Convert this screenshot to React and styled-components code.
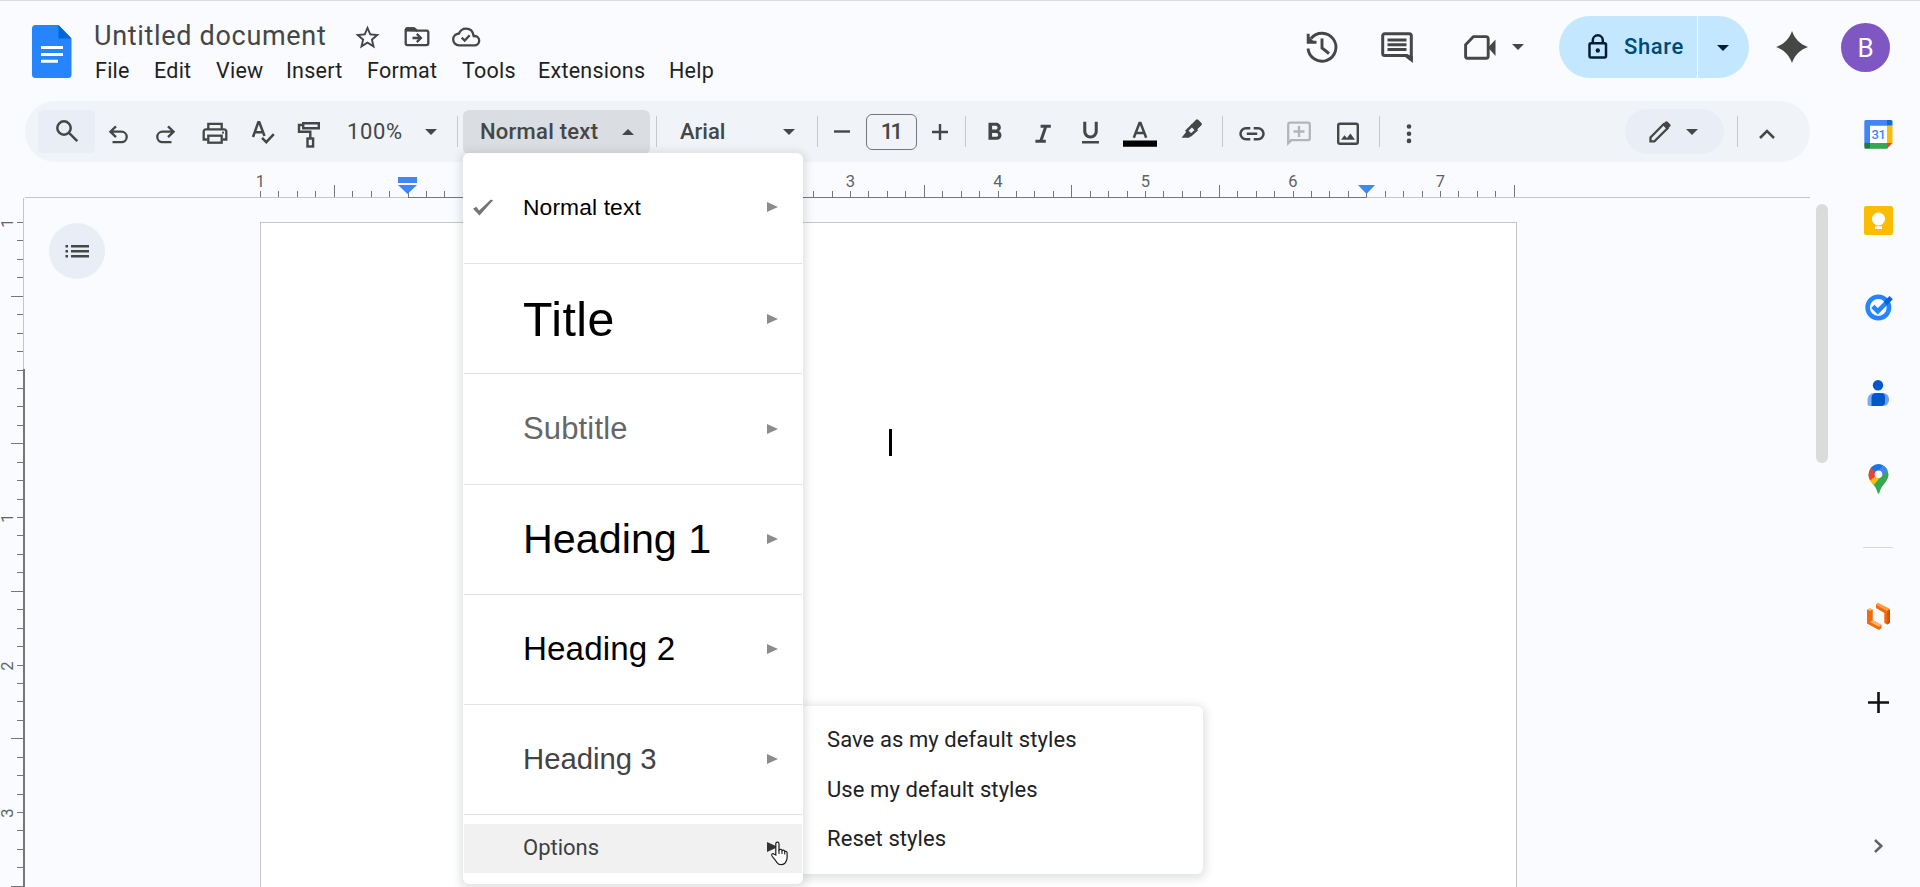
import React from "react";
import styled, { createGlobalStyle, css } from "styled-components";
import { MdFormatBold, MdFormatUnderlined } from "react-icons/md";

const INK = "#444746";
const INCH = 147.52;

const GlobalStyle = createGlobalStyle`
  *, *::before, *::after { box-sizing: border-box; }
  body { margin: 0; background: #f9fbff; overflow: hidden; font-family: Roboto, "Liberation Sans", sans-serif; }
  svg { display: block; flex: none; overflow: visible; }
`;

const Shell = styled.div`
  position: relative;
  display: flex;
  flex-direction: column;
  width: 1920px;
  height: 887px;
  overflow: hidden;
  background: #f9fbff;
  border-top: 1px solid #dadce2;
  color: ${INK};
`;

/* ---------- header ---------- */
const Header = styled.header`
  display: flex;
  height: 100px;
  padding: 0 30px 0 32px;
`;
const Logo = styled.div`
  width: 62px;
  padding-top: 24px;
`;
const Identity = styled.div`
  padding-top: 18px;
`;
const TitleRow = styled.div`
  display: flex;
  align-items: center;
  height: 33px;
`;
const DocTitle = styled.h1`
  margin: 0;
  width: 249px;
  padding-top: 2px;
  font-size: 27px;
  font-weight: 400;
  line-height: 33px;
  letter-spacing: 0.68px;
  white-space: nowrap;
`;
const TitleIcon = styled.span`
  display: flex;
  justify-content: center;
  width: ${(p) => p.$w}px;
  padding-top: 3px;
`;
const MenuBar = styled.nav`
  display: flex;
`;
const MenuName = styled.span`
  width: ${(p) => p.$w}px;
  padding-left: 1px;
  color: #1f1f1f;
  font-size: 21.5px;
  line-height: 37px;
  letter-spacing: 0.25px;
  white-space: nowrap;
`;
const Actions = styled.div`
  display: flex;
  align-items: center;
  height: 62px;
  margin: 15px 0 0 auto;
`;
const ActionIcon = styled.span`
  display: flex;
  align-items: center;
  justify-content: center;
  gap: ${(p) => p.$gap || 0}px;
  width: ${(p) => p.$w || 56}px;
  margin-left: ${(p) => p.$ml || 0}px;
  padding-left: ${(p) => p.$pl || 0}px;
`;
const Share = styled.div`
  display: flex;
  width: 190px;
  height: 62px;
  margin-left: 23px;
  border-radius: 31px;
  overflow: hidden;
  background: #c2e7ff;
`;
const ShareMain = styled.span`
  display: flex;
  align-items: center;
  gap: 16px;
  width: 139px;
  padding: 0 0 1px 29px;
  border-right: 1px solid #fff;
  color: #004a77;
  font-size: 22px;
  font-weight: 500;
  letter-spacing: 0.6px;
`;
const ShareMore = styled.span`
  display: flex;
  align-items: center;
  padding: 2px 0 0 19px;
`;
const Avatar = styled.span`
  display: flex;
  align-items: center;
  justify-content: center;
  width: 49px;
  height: 49px;
  margin-left: 22px;
  padding-top: 1px;
  border-radius: 50%;
  background: #7e57c2;
  color: #fff;
  font-size: 26px;
`;

/* ---------- toolbar ---------- */
const Body = styled.div`
  display: flex;
  flex: 1;
  min-height: 0;
`;
const Editor = styled.div`
  display: flex;
  flex-direction: column;
  width: 1836px;
`;
const Toolbar = styled.div`
  display: flex;
  align-items: center;
  flex: none;
  width: 1785px;
  height: 61px;
  margin-left: 25px;
  padding: 0 19px 0 13px;
  border-radius: 31px;
  background: #f0f3f8;
`;
const Tool = styled.span`
  display: flex;
  align-items: center;
  justify-content: center;
  flex: none;
  width: ${(p) => p.$w}px;
  height: 43px;
  margin-left: ${(p) => p.$ml || 0}px;
  padding-top: ${(p) => p.$pt || 0}px;
  ${(p) =>
    p.$search &&
    css`
      border-radius: 4px;
      background: #e9eef6;
    `}
`;
const Divider = styled.span`
  flex: none;
  width: 1px;
  height: 31px;
  margin-left: ${(p) => p.$ml || 0}px;
  background: #c7c9cc;
`;
const Picker = styled.span`
  display: flex;
  align-items: center;
  justify-content: space-between;
  flex: none;
  width: ${(p) => p.$w}px;
  height: 44px;
  margin-left: ${(p) => p.$ml || 0}px;
  padding: 0 ${(p) => p.$pr}px 0 ${(p) => p.$pl}px;
  border-radius: 6px;
  background: ${(p) => (p.$open ? "#dadde1" : "transparent")};
  font-size: 22px;
  font-weight: ${(p) => p.$weight || 500};
  letter-spacing: ${(p) => p.$ls || 0}px;
  white-space: nowrap;
`;
const SizeBox = styled.span`
  display: flex;
  align-items: center;
  justify-content: center;
  width: 51px;
  height: 36px;
  padding-right: 2px;
  border: 1px solid #747775;
  border-radius: 6px;
  font-size: 22px;
  font-weight: 500;
  letter-spacing: -2.8px;
`;
const ModePill = styled.span`
  display: flex;
  align-items: center;
  gap: 15px;
  width: 99px;
  height: 45px;
  margin-left: auto;
  padding-left: 24px;
  border-radius: 23px;
  background: #e9eef6;
`;

/* ---------- rulers ---------- */
const HRuler = styled.div`
  display: flex;
  flex-direction: column;
  position: relative;
  flex: none;
  height: 36px;
  padding-left: 25px;
`;
const HTicks = styled.div`
  display: flex;
  align-items: flex-end;
  height: 35px;
  padding-left: 235px;
`;
const HTick = styled.span`
  display: flex;
  flex-direction: column;
  align-items: flex-start;
  flex: none;
  width: ${INCH / 8}px;
  &::after {
    content: "";
    width: 1px;
    height: ${(p) => (p.$half ? 12 : 6)}px;
    background: #747775;
  }
`;
const HLabel = styled.span`
  width: 20px;
  margin-left: -9.500px;
  color: #5f6368;
  font-size: 16.5px;
  line-height: 19px;
  text-align: center;
`;
const HLine = styled.div`
  display: grid;
  grid-template-columns: 383px 959px 443px;
  height: 1px;
`;
const LineSegment = styled.span`
  background: ${(p) => (p.$dark ? "#747775" : "#c4c7c5")};
`;
const Marker = styled.span`
  position: absolute;
  top: ${(p) => p.$top}px;
  left: ${(p) => p.$left}px;
`;
const Workspace = styled.div`
  display: flex;
  flex: 1;
  min-height: 0;
  align-items: flex-start;
`;
const VRuler = styled.div`
  display: flex;
  flex: none;
  width: 25px;
  height: 100%;
  overflow: hidden;
`;
const VTicks = styled.div`
  display: flex;
  flex-direction: column;
  width: 23px;
  padding-top: 24px;
`;
const VTick = styled.span`
  display: flex;
  justify-content: space-between;
  align-items: flex-start;
  flex: none;
  height: ${INCH / 8}px;
  &::after {
    content: "";
    width: ${(p) => (p.$half ? 12 : 6)}px;
    height: 1px;
    margin-left: auto;
    background: #747775;
  }
`;
const VLabel = styled.span`
  width: 16px;
  height: 16px;
  margin-top: -7px;
  color: #5f6368;
  font-size: 16.5px;
  line-height: 16px;
  text-align: center;
  transform: rotate(-90deg);
`;
const VLine = styled.div`
  display: grid;
  grid-template: 171px 1fr / auto;
  width: 2px;
`;
const VSegment = styled.span`
  width: ${(p) => (p.$dark ? 2 : 1)}px;
  background: ${(p) => (p.$dark ? "#747775" : "#c4c7c5")};
`;

/* ---------- page ---------- */
const OutlineButton = styled.span`
  display: flex;
  align-items: center;
  justify-content: center;
  width: 56px;
  height: 56px;
  margin: 25px 0 0 24px;
  border-radius: 50%;
  background: #e9eef6;
`;
const Page = styled.main`
  width: 1257px;
  height: 100%;
  margin: 24px 0 0 155px;
  padding: 206px 0 0 628px;
  border: 1px solid #c4c7c5;
  background: #fff;
`;
const Caret = styled.span`
  display: block;
  width: 3px;
  height: 27px;
  background: #000;
`;
const Scrollbar = styled.span`
  width: 12px;
  height: 259px;
  margin: 6px 0 0 299px;
  border-radius: 6px;
  background: #dadcdb;
`;

/* ---------- side panel ---------- */
const SidePanel = styled.aside`
  display: flex;
  flex-direction: column;
  align-items: center;
  width: 84px;
  padding-top: 18px;
`;
const SideApp = styled.span`
  display: flex;
  align-items: center;
  justify-content: center;
  height: 30px;
  margin-bottom: ${(p) => p.$mb}px;
`;
const SideRule = styled.span`
  width: 30px;
  height: 1px;
  margin-bottom: 53px;
  background: #d6d8db;
`;

/* ---------- menus ---------- */
const popup = css`
  position: absolute;
  display: flex;
  flex-direction: column;
  border-radius: 6px;
  background: #fff;
  box-shadow: 0 2px 8px 3px rgba(60, 64, 67, 0.15);
`;
const StyleMenu = styled.div`
  ${popup}
  top: 152px;
  left: 463px;
  width: 340px;
  height: 731px;
  padding: 0 1px;
`;
const StyleItem = styled.div`
  display: flex;
  align-items: center;
  flex: none;
  height: ${(p) => p.$h}px;
  padding: 0 24px ${(p) => p.$pb || 0}px 9px;
  border-bottom: 1px solid #e1e3e1;
`;
const CheckSlot = styled.span`
  width: 50px;
`;
const StyleName = styled.span`
  flex: 1;
  color: ${(p) => p.$color};
  font-family: "Liberation Sans", Arial, sans-serif;
  font-size: ${(p) => p.$size}px;
  line-height: 60px;
  letter-spacing: ${(p) => p.$ls || 0}px;
  white-space: nowrap;
`;
const OptionsItem = styled.div`
  display: flex;
  align-items: center;
  justify-content: space-between;
  height: 49px;
  margin-top: 9px;
  padding: 0 24px 3px 59px;
  background: #f1f1f1;
  color: #3c4043;
  font-size: 22px;
`;
const SubMenu = styled.div`
  ${popup}
  top: 705px;
  left: 803px;
  width: 400px;
  height: 168px;
  padding: 9px 0 0 24px;
  border-radius: 0 6px 6px 0;
`;
const SubItem = styled.span`
  color: #202124;
  font-size: 22px;
  line-height: 49.5px;
  letter-spacing: 0.08px;
`;
const Pointer = styled.span`
  position: absolute;
  top: 840px;
  left: 770px;
`;

/* ---------- drawings ---------- */
const Glyph = ({ w = 36, h = 36, s = 2.3, c = INK, children }) => (
  <svg width={w} height={h} viewBox={`0 0 ${w} ${h}`} fill="none" stroke={c} strokeWidth={s}>
    {children}
  </svg>
);
const Triangle = ({ up, c = INK }) => (
  <svg width="12" height="6" viewBox="0 0 12 6" fill={c}>
    <path d={up ? "M0 6h12L6 0z" : "M0 0h12L6 6z"} />
  </svg>
);
const SubArrow = ({ c = "#8c8c8c" }) => (
  <svg width="11" height="10" viewBox="0 0 11 10" fill={c}>
    <path d="M0 0l11 5L0 10z" />
  </svg>
);

const DocsLogo = () => (
  <svg width="40" height="53" viewBox="0 0 40 53">
    <path d="M3.500 0H26.500L39.500 13.500V49.500a3.500 3.500 0 0 1-3.500 3.500H3.500A3.500 3.500 0 0 1 0 49.500V3.500A3.500 3.500 0 0 1 3.500 0z" fill="#2684fc" />
    <path d="M26.500 0l13 13.500h-13z" fill="#0066da" />
    <path d="M9 21h22v3H9zM9 28h22v3H9zM9 34.800h17v3H9z" fill="#fff" />
  </svg>
);
const Star = () => (
  <svg width="29" height="29" viewBox="0 0 24 24" fill={INK}>
    <path d="M22 9.240l-7.190-.62L12 2 9.190 8.630 2 9.240l5.460 4.730L5.820 21 12 17.270 18.180 21l-1.630-7.030L22 9.240zM12 15.400l-3.760 2.270 1-4.280-3.320-2.880 4.380-.38L12 6.100l1.710 4.040 4.380.38-3.320 2.880 1 4.280L12 15.400z" />
  </svg>
);
const FolderMove = () => (
  <Glyph w={26} h={20} s={2.3}>
    <path d="M1.700 2v14.300a1.800 1.800 0 0 0 1.800 1.800h19a1.800 1.800 0 0 0 1.800-1.800V5.400a1.800 1.800 0 0 0-1.800-1.800H13L10.200 1.300H2.500" />
    <path d="M1 4.500V2.200C1 1 1.700.3 2.800.3h7L13 3.500v1.300z" fill={INK} stroke="none" />
    <path d="M8.500 11h8M12.800 6.900l4.100 4.100-4.100 4.100" />
  </Glyph>
);
const CloudDone = () => (
  <Glyph w={28} h={20} s={2.3}>
    <path d="M7 18.400h15.300a4.700 4.700 0 0 0 .4-9.400h-1C21 4.300 18 1.600 14 1.600c-3.200 0-5.800 1.900-7 4.900-3.300.3-5.800 2.800-5.800 5.900C1.200 15.800 3.800 18.400 7 18.400z" />
    <path d="M9.700 10.600l3 3 5-5.300" />
  </Glyph>
);
const History = () => (
  <Glyph w={32} h={32} s={2.9}>
    <path d="M2 17.500A14 14 0 1 0 5 7.500" />
    <path d="M2.200 2.800v8.400h8.300" />
    <path d="M2 5l7 6.500H2z" fill={INK} stroke="none" />
    <path d="M16 7.500v9.500l7 5.500" />
  </Glyph>
);
const Comment = () => (
  <Glyph w={32} h={31} s={3}>
    <path d="M26 23.600H3.700A2 2 0 0 1 1.700 21.600V3.700a2 2 0 0 1 2-2h24.600a2 2 0 0 1 2 2V26z" />
    <path d="M23 24h8.800v7z" fill={INK} stroke="none" />
    <path d="M6.500 8h19M6.500 12.700h19M6.500 17.400h19" />
  </Glyph>
);
const Meet = () => (
  <Glyph w={32} h={25} s={2.9}>
    <path d="M9.500 1.600h12.700a2 2 0 0 1 2 2V21.300a2 2 0 0 1-2 2H3.600a2 2 0 0 1-2-2V9.800z" strokeLinejoin="round" />
    <path d="M24 12.500L31.500 4.500v16.500z" fill={INK} stroke="none" />
  </Glyph>
);
const Lock = () => (
  <Glyph w={20} h={26} s={2.5} c="#001d35">
    <rect x="1.500" y="9.300" width="16.500" height="14.300" rx="1.500" />
    <path d="M4.800 9V6.300a5 5 0 0 1 10 0V9" />
    <circle cx="9.800" cy="16.500" r="2.200" fill="#001d35" stroke="none" />
  </Glyph>
);
const Sparkle = () => (
  <svg width="32" height="32" viewBox="0 0 32 32" fill={INK}>
    <path d="M16 0C18.800 8 24 13.200 32 16 24 18.800 18.800 24 16 32 13.200 24 8 18.800 0 16 8 13.200 13.200 8 16 0z" />
  </svg>
);
const Search = () => (
  <Glyph s={2.5}>
    <circle cx="15" cy="14" r="6.700" />
    <path d="M19.700 18.700l8.600 8.500" />
  </Glyph>
);
const Undo = () => (
  <Glyph>
    <path d="M16 12.300l-5.600 5.400 5.600 5.400M10.800 17.700h10.700a5.200 5.200 0 0 1 0 10.400H12.500" />
  </Glyph>
);
const Redo = () => (
  <Glyph>
    <path d="M20 12.300l5.600 5.400-5.600 5.400M25.200 17.700H14.500a5.200 5.200 0 0 0 0 10.400h9" />
  </Glyph>
);
const Print = () => (
  <Glyph>
    <path d="M11.300 15V9.800h13.400V15M10.500 25.500H6.700V17.500a2.200 2.200 0 0 1 2.200-2.200h18.200a2.200 2.200 0 0 1 2.200 2.200v8H25.500" />
    <rect x="11.300" y="21.700" width="13.400" height="7" />
    <circle cx="26" cy="18.700" r="1.100" fill={INK} stroke="none" />
  </Glyph>
);
const Spellcheck = () => (
  <Glyph s={2.5}>
    <path d="M8 23L13.300 8.200h1L19.500 22M9.800 18.300h8M17 23.800l4.300 4.300 7.500-8" />
  </Glyph>
);
const PaintRoller = () => (
  <Glyph s={2.4}>
    <path d="M12.200 9.200h15.600v5H12.200zM12 11H8v6.800h11.300V24" />
    <rect x="16.500" y="24.500" width="5.600" height="8" />
  </Glyph>
);
const Italic = () => (
  <Glyph s={3}>
    <path d="M15.600 12.200h10.200M10.400 27.300h10.400M20.800 12.500L15.800 27" />
  </Glyph>
);
const TextColor = () => (
  <Glyph s={2.5}>
    <path d="M11.800 23.800L17.500 9h1L24.200 23.800M13.800 19h8.500" />
    <path d="M1 26.500h34v6.200H1z" fill="#000" stroke="none" />
  </Glyph>
);
const Highlighter = () => (
  <Glyph s={2}>
    <path d="M7.500 23.700l5-6.200L17.500 21.500l-2.500 2.200z" fill={INK} stroke="none" />
    <path d="M12.800 16.700l4.200 4.200 5.300-4.800-4.300-4.600z" strokeWidth="2.600" />
    <path d="M17 11l5-5.200c.8-.8 1.500-.8 2.200 0l3.200 3.200c.7.7.7 1.400 0 2.200l-5.300 5.200z" fill={INK} stroke="none" />
  </Glyph>
);
const LinkIcon = () => (
  <Glyph s={2.5}>
    <path d="M16.300 25.200h-4.300a5.300 5.300 0 0 1 0-11h4.300M19.700 14.200H24a5.300 5.300 0 0 1 0 11h-4.300M12.800 19.700h10.400" />
  </Glyph>
);
const AddComment = () => (
  <Glyph s={2.3} c="#b3b6b9">
    <path d="M7.200 29V10.700a2 2 0 0 1 2-2h17.600a2 2 0 0 1 2 2v13.500a2 2 0 0 1-2 2H9" />
    <path d="M6.100 26v6l6-6z" fill="#b3b6b9" stroke="none" />
    <path d="M18 12v11M12.500 17.500h11" />
  </Glyph>
);
const ImageIcon = () => (
  <Glyph s={2.4}>
    <rect x="8.200" y="9.700" width="19.600" height="20" rx="1.800" />
    <path d="M11 25.800l3.500-4.600 2.500 2.800 3.400-4.600 4.600 6.400z" fill={INK} stroke="none" />
  </Glyph>
);
const Dots = () => (
  <svg width="36" height="36" viewBox="0 0 36 36" fill={INK}>
    <circle cx="18" cy="12.500" r="2.300" />
    <circle cx="18" cy="19.700" r="2.300" />
    <circle cx="18" cy="26.900" r="2.300" />
  </svg>
);
const Pencil = () => (
  <Glyph w={22} h={22} s={2.3}>
    <path d="M1.500 20.300v-3.900L14.500 3.300l4 4L5.400 20.300z" />
    <path d="M13.500 3.500L16.300.8c.8-.7 1.600-.7 2.300 0l2.500 2.400c.7.7.7 1.500 0 2.200L18.200 8.200z" fill={INK} stroke="none" />
  </Glyph>
);
const BulletList = () => (
  <Glyph w={24} h={15} s={2.6}>
    <path d="M6 2.200h18M6 7.300h18M6 12.300h18M.5 2.200H3M.5 7.300H3M.5 12.300H3" />
  </Glyph>
);
const Check = () => (
  <svg width="21" height="17" viewBox="0 0 21 17" fill="#757575">
    <path d="M0 9.800l3.200-2 3 3.700L17.500.8l2.800.2L6.500 16.500z" />
  </svg>
);

const CalendarDay = styled.text`
  font: 500 13px Roboto, sans-serif;
  letter-spacing: -0.5px;
`;
const Calendar = () => (
  <svg width="29" height="29" viewBox="0 0 29 29">
    <rect x=".3" width="28.200" height="28.800" rx="1.500" fill="#fff" />
    <path d="M.3 23V1.500A1.500 1.500 0 0 1 1.800 0H23v5.700H6V23z" fill="#4285f4" />
    <path d="M23 0h4a1.500 1.500 0 0 1 1.500 1.500V5.700H23z" fill="#1967d2" />
    <path d="M23 5.700h5.500V23H23z" fill="#fbbc04" />
    <path d="M6 23h17v5.800H6z" fill="#34a853" />
    <path d="M.3 23H6v5.800H1.800a1.500 1.500 0 0 1-1.500-1.500z" fill="#188038" />
    <path d="M23 23h5.500L23 28.800z" fill="#ea4335" />
    <CalendarDay x="14.500" y="19" textAnchor="middle" fill="#4285f4">31</CalendarDay>
  </svg>
);
const Keep = () => (
  <svg width="29" height="29" viewBox="0 0 29 29">
    <rect width="29" height="29" rx="2" fill="#fbbc04" />
    <circle cx="14.500" cy="13" r="6.500" fill="#fff" />
    <path d="M11.500 16h6v2.800h-6zM11 20.300h7V23h-7z" fill="#fff" />
  </svg>
);
const Tasks = () => (
  <svg width="29" height="28" viewBox="0 0 29 28" fill="none">
    <circle cx="14.300" cy="14.500" r="10.700" stroke="#2684fc" strokeWidth="4.600" />
    <path d="M8.800 13.300l5 5L25 7" stroke="#2684fc" strokeWidth="4.600" />
    <path d="M19.800 8.800L25.600 3l3.200 3.300-6 6.200z" fill="#0066da" />
  </svg>
);
const Contacts = () => (
  <svg width="22" height="27" viewBox="0 0 22 27">
    <path d="M7 13h3v13H2.500A2 2 0 0 1 .5 24v-4.500A6.500 6.500 0 0 1 7 13z" fill="#7baaf7" />
    <path d="M12 13h4a6 6 0 0 1 6 6v1a6 6 0 0 1-6 6h-4z" fill="#6f9bff" />
    <path d="M9 13h5a4 4 0 0 1 4 4v5a4 4 0 0 1-4 4H4.500v-8.500A4.500 4.500 0 0 1 9 13z" fill="#0057cc" />
    <circle cx="11" cy="5.300" r="5.200" fill="#0057cc" />
  </svg>
);
const Maps = () => (
  <svg width="21" height="30" viewBox="0 0 21 30">
    <defs>
      <clipPath id="pin">
        <path d="M10.500.3A10 10 0 0 0 .5 10.300C.5 14 2 16.500 4.500 19.500c2.700 3.200 4 5.300 5 8.800.3 1.300.7 1.500 1 1.500s.7-.2 1-1.500c1-3.500 2.300-5.600 5-8.800 2.500-3 4-5.500 4-9.200a10 10 0 0 0-10-10z" />
      </clipPath>
    </defs>
    <g clipPath="url(#pin)">
      <path d="M0 0h21v30H0z" fill="#34a853" />
      <path d="M10.500 10.300L-1 14v9l5 0L21 3V0z" fill="#fbbc04" />
      <path d="M0 16.500L3 21 18 4.500 10 8z" fill="#fbbc04" />
      <path d="M2.500 3.500L10.500 10l-9 7L-1 14z" fill="#ea4335" />
      <path d="M13 13.500L19.500 5.500V0H7z" fill="#4285f4" />
      <path d="M2.500 3.800l6.500 5.500L15 1V0H4z" fill="#1a73e8" />
    </g>
    <circle cx="10.500" cy="10.300" r="3.800" fill="#fff" />
  </svg>
);
const OrangeBrackets = () => (
  <svg width="23" height="27" viewBox="0 0 23 27">
    <path d="M0 6.500h5.800V17l8.700 5v3L12 27 0 20.500z" fill="#f4690b" />
    <path d="M0 6.500L2.800 5l3 1.500-2.800 1.500zM3 19l2.800-2 8.700 5-2.500 1.800z" fill="#ffb469" />
    <path d="M9 1.500L11 0l12 6.200v13.600L20.300 21.500 17.300 20V10L9 5z" fill="#f4690b" />
    <path d="M9 1.800L11 0l12 6.200-3 1.800z" fill="#ff9f47" />
    <path d="M20.300 8L23 6.200v13.600l-2.700 1.700z" fill="#d94f04" />
  </svg>
);
const Hand = () => (
  <svg width="19" height="25" viewBox="0 0 19 25">
    <path
      d="M5.800 14V2.700a1.600 1.600 0 0 1 3.200 0v6.200c.6-.9 2.700-.8 3 .6.700-.8 2.500-.5 2.700.9.9-.5 2.400.1 2.400 1.500v5.200c0 1.600-.8 3-1.700 4.500-1 1.500-2.200 2.100-4 2.100-2 0-3.500-.6-4.300-2-1.200-2.200-4-5-5.200-7-.8-1.600.8-2.600 2-1.800z"
      fill="#fff"
      stroke="#1c1c1c"
      strokeWidth="1.200"
    />
    <path d="M9 9v4M12 10v3M14.700 10.800v2.700" stroke="#1c1c1c" strokeWidth="1.100" />
  </svg>
);

/* ---------- data ---------- */
const MENUS = [
  ["File", 59], ["Edit", 62], ["View", 70], ["Insert", 81],
  ["Format", 95], ["Tools", 76], ["Extensions", 131], ["Help", 60],
];
const STYLES = [
  { name: "Normal text", size: 22.8, ls: 0.12, color: "#000", h: 111, pb: 2, checked: true },
  { name: "Title", size: 48.3, ls: 0.5, color: "#000", h: 110 },
  { name: "Subtitle", size: 31, ls: 0.15, color: "#666", h: 111 },
  { name: "Heading 1", size: 41.3, color: "#000", h: 110, pb: 2 },
  { name: "Heading 2", size: 33.2, ls: 0.1, color: "#000", h: 110, pb: 2 },
  { name: "Heading 3", size: 29.3, color: "#434343", h: 110, pb: 2 },
];
const H_LABELS = { 0: 1, 32: 3, 40: 4, 48: 5, 56: 6, 64: 7 };
const V_LABELS = { 0: 1, 16: 1, 24: 2, 32: 3 };

export default function App() {
  return (
    <>
      <GlobalStyle />
      <Shell>
        <Header>
          <Logo><DocsLogo /></Logo>
          <Identity>
            <TitleRow>
              <DocTitle>Untitled document</DocTitle>
              <TitleIcon $w={48}><Star /></TitleIcon>
              <TitleIcon $w={51}><FolderMove /></TitleIcon>
              <TitleIcon $w={48}><CloudDone /></TitleIcon>
            </TitleRow>
            <MenuBar>
              {MENUS.map(([name, w]) => <MenuName key={name} $w={w}>{name}</MenuName>)}
            </MenuBar>
          </Identity>
          <Actions>
            <ActionIcon><History /></ActionIcon>
            <ActionIcon $ml={19}><Comment /></ActionIcon>
            <ActionIcon $ml={19} $w={92} $gap={16} $pl={8}><Meet /><Triangle /></ActionIcon>
            <Share>
              <ShareMain><Lock />Share</ShareMain>
              <ShareMore><Triangle c="#001d35" /></ShareMore>
            </Share>
            <ActionIcon $ml={15} $w={55}><Sparkle /></ActionIcon>
            <Avatar>B</Avatar>
          </Actions>
        </Header>
        <Body>
          <Editor>
            <Toolbar>
              <Tool $w={57} $search><Search /></Tool>
              <Tool $w={46}><Undo /></Tool>
              <Tool $w={50}><Redo /></Tool>
              <Tool $w={47}><Print /></Tool>
              <Tool $w={49}><Spellcheck /></Tool>
              <Tool $w={44}><PaintRoller /></Tool>
              <Picker $w={125} $pl={16} $pr={19} $ls={0.6} $weight={400}>100%<Triangle /></Picker>
              <Divider $ml={1} />
              <Picker $w={187} $ml={5} $pl={17} $pr={16} $ls={0.25} $open>Normal text<Triangle up /></Picker>
              <Divider $ml={6} />
              <Picker $w={160} $pl={23} $pr={22}>Arial<Triangle /></Picker>
              <Divider />
              <Tool $w={48}><Glyph w={16} h={3} s={2.4}><path d="M0 1.500h16" /></Glyph></Tool>
              <SizeBox>11</SizeBox>
              <Tool $w={45}><Glyph w={16} h={16} s={2.4}><path d="M0 8h16M8 0v16" /></Glyph></Tool>
              <Divider $ml={3} />
              <Tool $w={48} $ml={4} $pt={2}><MdFormatBold size={29} color={INK} /></Tool>
              <Tool $w={49}><Italic /></Tool>
              <Tool $w={46} $pt={2}><MdFormatUnderlined size={29} color={INK} /></Tool>
              <Tool $w={54}><TextColor /></Tool>
              <Tool $w={49}><Highlighter /></Tool>
              <Divider $ml={6} />
              <Tool $w={49} $ml={4}><LinkIcon /></Tool>
              <Tool $w={46}><AddComment /></Tool>
              <Tool $w={52}><ImageIcon /></Tool>
              <Divider $ml={5} />
              <Tool $w={58}><Dots /></Tool>
              <ModePill><Pencil /><Triangle /></ModePill>
              <Divider $ml={13} />
              <Tool $w={49} $ml={4}><Glyph s={2.5}><path d="M11 24l7-7 7 7" /></Glyph></Tool>
            </Toolbar>
            <HRuler>
              <HTicks>
                {Array.from({ length: 69 }, (_, i) => (
                  <HTick key={i} $half={i % 8 === 4}>
                    {H_LABELS[i] && <HLabel>{H_LABELS[i]}</HLabel>}
                  </HTick>
                ))}
              </HTicks>
              <HLine><LineSegment /><LineSegment $dark /><LineSegment /></HLine>
              <Marker $left={398} $top={15}>
                <svg width="19" height="17" viewBox="0 0 19 17" fill="#4285f4"><path d="M0 0h19v6H0zM0 8h19l-9.500 9z" /></svg>
              </Marker>
              <Marker $left={1358} $top={23}>
                <svg width="17" height="9" viewBox="0 0 17 9" fill="#4285f4"><path d="M0 0h17L8.500 9z" /></svg>
              </Marker>
            </HRuler>
            <Workspace>
              <VRuler>
                <VTicks>
                  {Array.from({ length: 37 }, (_, i) => (
                    <VTick key={i} $half={i % 8 === 4}>
                      {V_LABELS[i] && <VLabel>{V_LABELS[i]}</VLabel>}
                    </VTick>
                  ))}
                </VTicks>
                <VLine><VSegment /><VSegment $dark /></VLine>
              </VRuler>
              <OutlineButton><BulletList /></OutlineButton>
              <Page><Caret /></Page>
              <Scrollbar />
            </Workspace>
          </Editor>
          <SidePanel>
            <SideApp $mb={56}><Calendar /></SideApp>
            <SideApp $mb={57}><Keep /></SideApp>
            <SideApp $mb={56}><Tasks /></SideApp>
            <SideApp $mb={56}><Contacts /></SideApp>
            <SideApp $mb={53}><Maps /></SideApp>
            <SideRule />
            <SideApp $mb={56}><OrangeBrackets /></SideApp>
            <SideApp $mb={114}>
              <Glyph w={21} h={21} s={2.6} c="#111"><path d="M0 10.500h21M10.500 0v21" /></Glyph>
            </SideApp>
            <SideApp $mb={0}>
              <Glyph w={9} h={14} s={2.5} c="#5f6368"><path d="M1 1l6.300 6L1 13" /></Glyph>
            </SideApp>
          </SidePanel>
        </Body>
        <SubMenu>
          <SubItem>Save as my default styles</SubItem>
          <SubItem>Use my default styles</SubItem>
          <SubItem>Reset styles</SubItem>
        </SubMenu>
        <StyleMenu>
          {STYLES.map((s) => (
            <StyleItem key={s.name} $h={s.h} $pb={s.pb}>
              <CheckSlot>{s.checked && <Check />}</CheckSlot>
              <StyleName $size={s.size} $color={s.color} $ls={s.ls}>{s.name}</StyleName>
              <SubArrow />
            </StyleItem>
          ))}
          <OptionsItem>Options<SubArrow c="#333" /></OptionsItem>
        </StyleMenu>
        <Pointer><Hand /></Pointer>
      </Shell>
    </>
  );
}
